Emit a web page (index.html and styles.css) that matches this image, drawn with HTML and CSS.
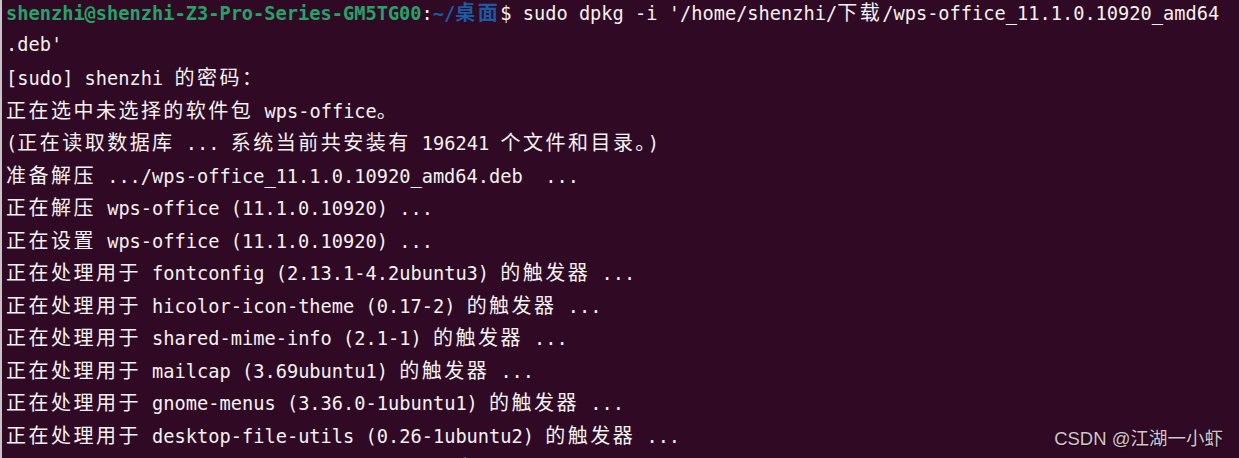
FILE: index.html
```html
<!DOCTYPE html>
<html lang="zh-CN">
<head>
<meta charset="utf-8">
<title>Terminal</title>
<link rel="stylesheet" href="styles.css">
</head>
<body>
<div class="term">
  <div class="sel"></div>
  <div class="screen">
    <div class="line"><span class="user">shenzhi@shenzhi-Z3-Pro-Series-GM5TG00</span>:<span class="path">~/<span class="cjk">桌面</span></span>$ sudo dpkg -i '/home/shenzhi/<span class="cjk">下载</span>/wps-office_11.1.0.10920_amd64</div>
    <div class="line">.deb'</div>
    <div class="line">[sudo] shenzhi <span class="cjk">的密码：</span></div>
    <div class="line"><span class="cjk">正在选中未选择的软件包</span> wps-office<span class="cjk">。</span></div>
    <div class="line">(<span class="cjk">正在读取数据库</span> ... <span class="cjk">系统当前共安装有</span> 196241 <span class="cjk">个文件和目录。</span>)</div>
    <div class="line"><span class="cjk">准备解压</span> .../wps-office_11.1.0.10920_amd64.deb  ...</div>
    <div class="line"><span class="cjk">正在解压</span> wps-office (11.1.0.10920) ...</div>
    <div class="line"><span class="cjk">正在设置</span> wps-office (11.1.0.10920) ...</div>
    <div class="line"><span class="cjk">正在处理用于</span> fontconfig (2.13.1-4.2ubuntu3) <span class="cjk">的触发器</span> ...</div>
    <div class="line"><span class="cjk">正在处理用于</span> hicolor-icon-theme (0.17-2) <span class="cjk">的触发器</span> ...</div>
    <div class="line"><span class="cjk">正在处理用于</span> shared-mime-info (2.1-1) <span class="cjk">的触发器</span> ...</div>
    <div class="line"><span class="cjk">正在处理用于</span> mailcap (3.69ubuntu1) <span class="cjk">的触发器</span> ...</div>
    <div class="line"><span class="cjk">正在处理用于</span> gnome-menus (3.36.0-1ubuntu1) <span class="cjk">的触发器</span> ...</div>
    <div class="line"><span class="cjk">正在处理用于</span> desktop-file-utils (0.26-1ubuntu2) <span class="cjk">的触发器</span> ...</div>
    <div class="line"><span class="user">shenzhi@shenzhi-Z3-Pro-Series-GM5TG00</span>:<span class="path">~/<span class="cjk">桌面</span></span>$ </div>
  </div>
  <div class="wm">CSDN @江湖一小虾</div>
</div>
</body>
</html>
```

FILE: styles.css
```css
html, body {
  margin: 0;
  padding: 0;
  background: #300a24;
}

.term {
  position: relative;
  width: 1239px;
  height: 458px;
  overflow: hidden;
  background: #300a24;
  border-left: 2px solid #c9c4c8;
  box-sizing: border-box;
}

.sel {
  position: absolute;
  left: -2px;
  top: 0;
  width: 2px;
  height: 33px;
  background: #2f6ab8;
}

.screen {
  margin-top: -4px;
  padding-left: 4px;
  font-family: "DejaVu Sans Mono", "Liberation Mono", monospace;
  font-size: 18.67px;
  line-height: 32.5px;
  color: #f4f1f3;
}

.line {
  white-space: pre;
  height: 32.5px;
}

.cjk {
  font-family: "Noto Sans CJK SC", "Noto Sans CJK JP", sans-serif;
  font-size: 20px;
  letter-spacing: 2.48px;
  line-height: 32.5px;
}

.user {
  color: #26a269;
  font-weight: bold;
}

.path {
  color: #1c5aa6;
  font-weight: bold;
}

.wm {
  position: absolute;
  right: 16px;
  bottom: 8px;
  font-family: "Liberation Sans", "Noto Sans CJK SC", sans-serif;
  font-size: 18.5px;
  color: #cfc6cc;
  text-shadow: 1px 1px 1px #150010;
}
```
